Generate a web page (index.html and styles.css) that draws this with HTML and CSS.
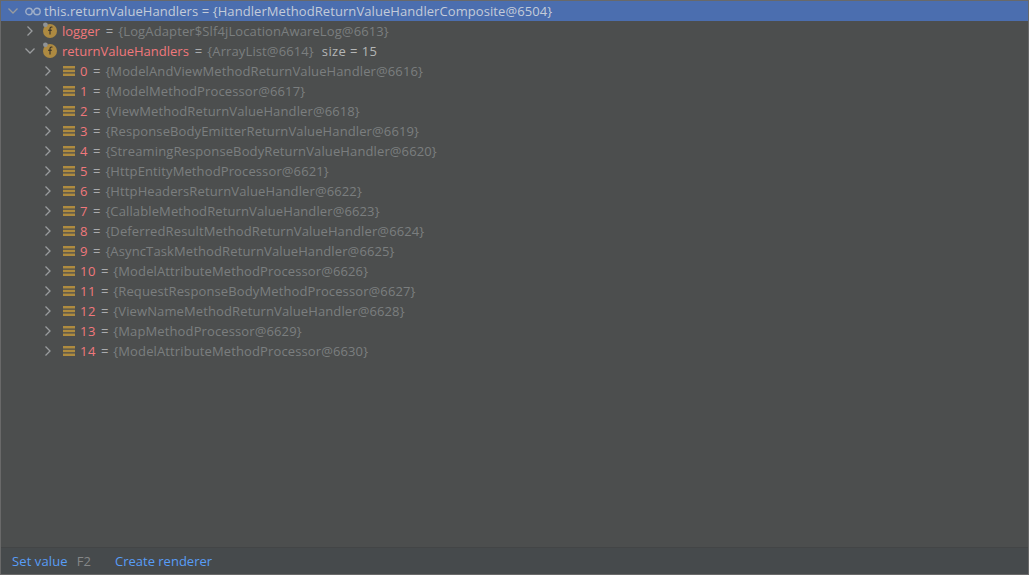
FILE: index.html
```html
<!DOCTYPE html>
<html lang="en">
<head>
<meta charset="utf-8">
<title>Debugger value</title>
<link rel="stylesheet" href="styles.css">
</head>
<body>
<svg class="defs" width="0" height="0" aria-hidden="true">
  <symbol id="open" viewBox="0 0 12 12"><path d="M1.5 3.5 6 8l4.5-4.5" fill="none" stroke="#9a9c9e" stroke-width="1.3"/></symbol>
  <symbol id="closed" viewBox="0 0 12 12"><path d="M3.5 1.5 8 6l-4.5 4.5" fill="none" stroke="#9a9c9e" stroke-width="1.3"/></symbol>
  <symbol id="field" viewBox="0 0 16 16"><circle cx="8" cy="9" r="7" fill="#ad8a41"/><circle cx="3.4" cy="2.8" r="2.4" fill="#8f9397"/><path d="M10.4 5.2c-1.4-.5-2.4-.1-2.4 1.3v6M6 8.2h3.8" fill="none" stroke="#33302a" stroke-width="1.1"/></symbol>
  <symbol id="arr" viewBox="0 0 12 10"><path d="M0 0h12v2.4H0zM0 3.8h12v2.4H0zM0 7.6h12V10H0z" fill="#ae8b3f"/></symbol>
</svg>
<main class="panel">
  <div class="tree">
    <div class="row root">
      <svg class="chev"><use href="#open"/></svg>
      <svg class="glasses" viewBox="0 0 16 9"><circle cx="4" cy="4.5" r="3.2" fill="none" stroke="#a0afc8" stroke-width="1.4"/><circle cx="12" cy="4.5" r="3.2" fill="none" stroke="#a0afc8" stroke-width="1.4"/><path d="M7 4.5h2" stroke="#a0afc8" stroke-width="1.4"/></svg>
      <span class="rootname">this.returnValueHandlers = {HandlerMethodReturnValueHandlerComposite@6504}</span>
    </div>
    <div class="row lvl1">
      <svg class="chev"><use href="#closed"/></svg>
      <svg class="ficon"><use href="#field"/></svg>
      <span class="name">logger</span><span class="eq">=</span><span class="val">{LogAdapter$Slf4jLocationAwareLog@6613}</span>
    </div>
    <div class="row lvl1">
      <svg class="chev"><use href="#open"/></svg>
      <svg class="ficon"><use href="#field"/></svg>
      <span class="name">returnValueHandlers</span><span class="eq">=</span><span class="val">{ArrayList@6614}</span><span class="size">size = 15</span>
    </div>
    <div class="row lvl2"><svg class="chev"><use href="#closed"/></svg><svg class="aicon"><use href="#arr"/></svg><span class="name">0</span><span class="eq">=</span><span class="val">{ModelAndViewMethodReturnValueHandler@6616}</span></div>
    <div class="row lvl2"><svg class="chev"><use href="#closed"/></svg><svg class="aicon"><use href="#arr"/></svg><span class="name">1</span><span class="eq">=</span><span class="val">{ModelMethodProcessor@6617}</span></div>
    <div class="row lvl2"><svg class="chev"><use href="#closed"/></svg><svg class="aicon"><use href="#arr"/></svg><span class="name">2</span><span class="eq">=</span><span class="val">{ViewMethodReturnValueHandler@6618}</span></div>
    <div class="row lvl2"><svg class="chev"><use href="#closed"/></svg><svg class="aicon"><use href="#arr"/></svg><span class="name">3</span><span class="eq">=</span><span class="val">{ResponseBodyEmitterReturnValueHandler@6619}</span></div>
    <div class="row lvl2"><svg class="chev"><use href="#closed"/></svg><svg class="aicon"><use href="#arr"/></svg><span class="name">4</span><span class="eq">=</span><span class="val">{StreamingResponseBodyReturnValueHandler@6620}</span></div>
    <div class="row lvl2"><svg class="chev"><use href="#closed"/></svg><svg class="aicon"><use href="#arr"/></svg><span class="name">5</span><span class="eq">=</span><span class="val">{HttpEntityMethodProcessor@6621}</span></div>
    <div class="row lvl2"><svg class="chev"><use href="#closed"/></svg><svg class="aicon"><use href="#arr"/></svg><span class="name">6</span><span class="eq">=</span><span class="val">{HttpHeadersReturnValueHandler@6622}</span></div>
    <div class="row lvl2"><svg class="chev"><use href="#closed"/></svg><svg class="aicon"><use href="#arr"/></svg><span class="name">7</span><span class="eq">=</span><span class="val">{CallableMethodReturnValueHandler@6623}</span></div>
    <div class="row lvl2"><svg class="chev"><use href="#closed"/></svg><svg class="aicon"><use href="#arr"/></svg><span class="name">8</span><span class="eq">=</span><span class="val">{DeferredResultMethodReturnValueHandler@6624}</span></div>
    <div class="row lvl2"><svg class="chev"><use href="#closed"/></svg><svg class="aicon"><use href="#arr"/></svg><span class="name">9</span><span class="eq">=</span><span class="val">{AsyncTaskMethodReturnValueHandler@6625}</span></div>
    <div class="row lvl2"><svg class="chev"><use href="#closed"/></svg><svg class="aicon"><use href="#arr"/></svg><span class="name">10</span><span class="eq">=</span><span class="val">{ModelAttributeMethodProcessor@6626}</span></div>
    <div class="row lvl2"><svg class="chev"><use href="#closed"/></svg><svg class="aicon"><use href="#arr"/></svg><span class="name">11</span><span class="eq">=</span><span class="val">{RequestResponseBodyMethodProcessor@6627}</span></div>
    <div class="row lvl2"><svg class="chev"><use href="#closed"/></svg><svg class="aicon"><use href="#arr"/></svg><span class="name">12</span><span class="eq">=</span><span class="val">{ViewNameMethodReturnValueHandler@6628}</span></div>
    <div class="row lvl2"><svg class="chev"><use href="#closed"/></svg><svg class="aicon"><use href="#arr"/></svg><span class="name">13</span><span class="eq">=</span><span class="val">{MapMethodProcessor@6629}</span></div>
    <div class="row lvl2"><svg class="chev"><use href="#closed"/></svg><svg class="aicon"><use href="#arr"/></svg><span class="name">14</span><span class="eq">=</span><span class="val">{ModelAttributeMethodProcessor@6630}</span></div>
  </div>
  <footer class="foot">
    <span class="link">Set value</span><span class="key">F2</span><span class="link second">Create renderer</span>
  </footer>
</main>
</body>
</html>
```
FILE: styles.css
```css
* { box-sizing: border-box; }
html, body { margin: 0; height: 100%; }
.defs { position: absolute; }
body { background: #4c4e4e; overflow: hidden; }
.panel {
  width: 1029px;
  height: 575px;
  display: flex;
  flex-direction: column;
  border: 1px solid #696969;
  font-family: "Open Sans", "Noto Sans", sans-serif;
  font-size: 13px;
  color: #bbbbbb;
}
.tree { flex: 1; }
.row { height: 20px; display: flex; align-items: center; white-space: nowrap; }
.root { background: #4b6eaf; padding-left: 6px; }
.rootname { color: #c3cbd9; margin-left: 3px; letter-spacing: 0.08px; }
.lvl1 { padding-left: 23px; }
.lvl2 { padding-left: 41px; }
.chev { width: 12px; height: 12px; flex: none; }
.glasses { width: 16px; height: 9px; margin-left: 6px; flex: none; }
.ficon { width: 16px; height: 16px; margin-left: 6px; margin-right: 1px; margin-top: -2px; flex: none; }
.aicon { width: 12px; height: 10px; margin-left: 9px; flex: none; }
.lvl1 .name { margin-left: 3px; }
.lvl1 .eq { margin-left: 6px; }
.lvl2 .name { margin-left: 5px; letter-spacing: 0.5px; }
.name { color: #f0787c; }
.eq { color: #a9abad; margin: 0 5px; }
.val { color: #7b7e7f; letter-spacing: 0.12px; }
.size { color: #b4b6b6; margin-left: 8px; letter-spacing: 0.4px; }
.foot {
  height: 27px;
  flex: none;
  background: #464a4c;
  border-top: 1px solid #434546;
  display: flex;
  align-items: center;
  padding-left: 11px;
  letter-spacing: 0.1px;
}
.link { color: #589df6; }
.key { color: #858788; margin-left: 9px; }
.second { margin-left: 24px; letter-spacing: 0; }
```
